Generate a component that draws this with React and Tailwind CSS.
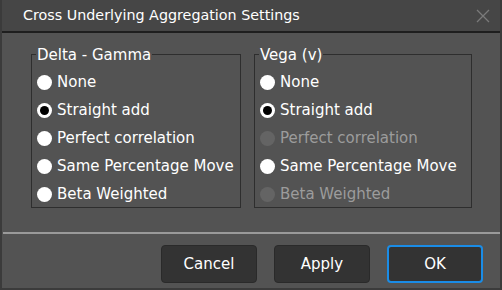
import React from 'react';

const font = { fontFamily: '"DejaVu Sans", Verdana, sans-serif' };

const groups = [
  {
    title: 'Delta - Gamma',
    items: [
      { label: 'None' },
      { label: 'Straight add', checked: true },
      { label: 'Perfect correlation' },
      { label: 'Same Percentage Move' },
      { label: 'Beta Weighted' },
    ],
  },
  {
    title: 'Vega (v)',
    items: [
      { label: 'None' },
      { label: 'Straight add', checked: true },
      { label: 'Perfect correlation', disabled: true },
      { label: 'Same Percentage Move' },
      { label: 'Beta Weighted', disabled: true },
    ],
  },
];

const Radio = ({ label, checked, disabled }) => (
  <div className="flex items-center h-[28px]">
    <span
      className={
        'w-[15px] h-[15px] rounded-full flex items-center justify-center shrink-0 ' +
        (disabled ? 'bg-[#646464]' : 'bg-white')
      }
    >
      {checked && <span className="w-[9px] h-[9px] rounded-full bg-black" />}
    </span>
    <span className={'ml-[5px] text-[15px] leading-none ' + (disabled ? 'text-[#9c9c9c]' : 'text-white')}>
      {label}
    </span>
  </div>
);

const Group = ({ title, items, className }) => (
  <div className={'relative border border-[#2e2e2e] h-[154px] pt-[13px] pl-[5px] ' + className}>
    <span className="absolute -top-[8px] left-[4px] px-[1px] bg-[#535353] text-white text-[15px] leading-[16px]">
      {title}
    </span>
    {items.map((it) => (
      <Radio key={it.label} {...it} />
    ))}
  </div>
);

const Btn = ({ children, primary }) => (
  <button
    className={
      'w-[96px] h-[38px] rounded-[4px] bg-[#333333] text-white text-[15px] ' +
      (primary ? 'border-2 border-[#1a8ce6]' : 'border border-[#2a2a2a]')
    }
  >
    {children}
  </button>
);

export default function App() {
  return (
    <div
      className="w-[502px] h-[290px] bg-[#535353] border-l-2 border-r-2 border-b-2 border-[#3b3b3b] flex flex-col overflow-hidden"
      style={font}
    >
      <div className="h-[33px] bg-[#464646] border-b-2 border-[#1e1e1e] flex items-center pl-[21px] pr-[9px] shrink-0">
        <span className="text-white text-[14.3px] flex-1">Cross Underlying Aggregation Settings</span>
        <svg width="14" height="14" viewBox="0 0 14 14" className="mr-[1px]">
          <path d="M1 1 L13 13 M13 1 L1 13" stroke="#7a7a7a" strokeWidth="1.3" />
        </svg>
      </div>
      <div className="flex pl-[29px] pt-[21px] gap-[13px]">
        <Group {...groups[0]} className="w-[210px]" />
        <Group {...groups[1]} className="w-[218px]" />
      </div>
      <div className="mt-[24px] h-[2px] bg-[#9a9a9a] ml-[1px]" />
      <div className="flex justify-end gap-[17px] pr-[17px] pt-[11px]">
        <Btn>Cancel</Btn>
        <Btn>Apply</Btn>
        <Btn primary>OK</Btn>
      </div>
    </div>
  );
}
